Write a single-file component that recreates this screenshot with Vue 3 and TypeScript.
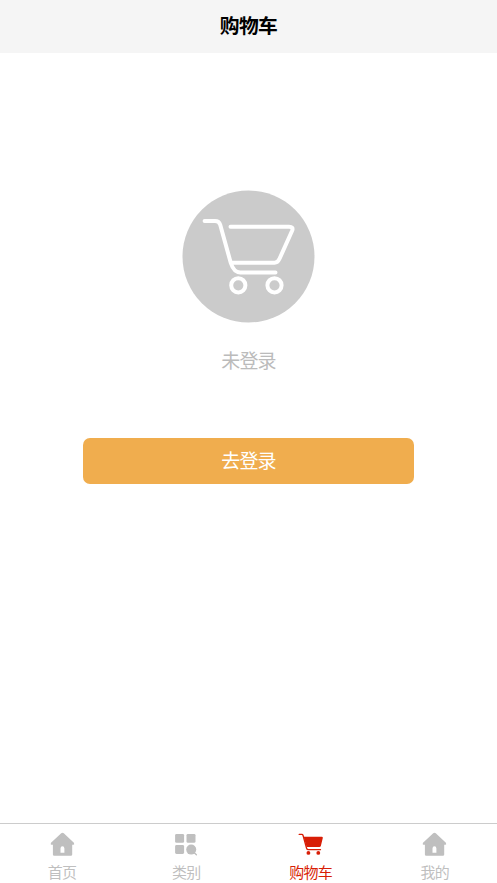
<script setup lang="ts">
import { ref } from 'vue'

interface Tab {
  id: string
  label: string
  icon: 'home' | 'category' | 'cart'
}

const tabs: Tab[] = [
  { id: 'home', label: '首页', icon: 'home' },
  { id: 'category', label: '类别', icon: 'category' },
  { id: 'cart', label: '购物车', icon: 'cart' },
  { id: 'mine', label: '我的', icon: 'home' },
]
const active = ref('cart')
</script>

<template>
  <div class="page">
    <header class="header">购物车</header>
    <main class="content">
      <svg class="empty-cart" viewBox="-0.5 -0.5 133 133">
        <circle cx="66" cy="66" r="66" fill="#cbcbcb" />
        <g fill="none" stroke="#fff" stroke-width="4" stroke-linecap="round" stroke-linejoin="round">
          <path d="M22.1 30.4H32.5Q36.6 30.4 37.7 34.2L48.3 72.5Q51.3 81.9 57.8 81.9H93" />
          <path d="M48 36.2H106.5Q111.3 36.2 109.6 40.3L97 68.3Q95.2 72.3 92 72.3H49.8" />
          <circle cx="55.8" cy="94.8" r="7.1" />
          <circle cx="92" cy="94.8" r="7.1" />
        </g>
      </svg>
      <p class="status">未登录</p>
      <button class="login" type="button">去登录</button>
    </main>
    <nav class="tabbar">
      <a
        v-for="tab in tabs"
        :key="tab.id"
        class="tab"
        :class="{ active: active === tab.id }"
        @click="active = tab.id"
      >
        <svg class="icon" viewBox="0 -0.5 25 25" fill="currentColor">
          <path
            v-if="tab.icon === 'home'"
            fill-rule="evenodd"
            d="M11.2.7Q12.5-.4 13.8.7L23.9 10.2Q24.8 12.2 23.5 12.3H22.2V22Q22.2 23.3 20.9 23.3H4.2Q2.9 23.3 2.9 22V12.3H1.4Q.1 12.2 1 10.2ZM10.5 20.2H14.4V16Q14.4 13.7 12.45 13.7T10.5 16Z"
          />
          <g v-else-if="tab.icon === 'category'">
            <rect x="1.1" y="1.4" width="9" height="8.9" rx="1.4" />
            <rect x="12.5" y="1.4" width="9" height="8.9" rx="1.4" />
            <rect x="1.1" y="12.6" width="9" height="8.9" rx="1.4" />
            <circle cx="17.2" cy="17.1" r="5" />
            <path d="M20 20L22.4 22.3" stroke="currentColor" stroke-width="1.3" stroke-linecap="round" />
          </g>
          <g v-else transform="translate(0.5 0)">
            <path
              d="M.7 1.9H3.4Q4.2 1.9 4.5 2.8L8 15.5Q8.5 17.2 9.8 17.2H22"
              fill="none"
              stroke="currentColor"
              stroke-width="1.3"
              stroke-linecap="round"
            />
            <path d="M5.1 4.3H23.3Q24.5 4.3 24.3 5.5L22.4 13.3Q22.1 14.6 20.8 14.6H8.1Z" />
            <circle cx="9.9" cy="20.4" r="1.9" />
            <circle cx="19.8" cy="20.4" r="1.9" />
          </g>
        </svg>
        <span class="label">{{ tab.label }}</span>
      </a>
    </nav>
  </div>
</template>

<style>
body {
  background: #fff;
}
</style>

<style scoped>
.page {
  display: flex;
  flex-direction: column;
  height: 883px;
  font-family: 'Noto Sans CJK SC', sans-serif;
  overflow: hidden;
}

.header {
  height: 53px;
  background: #f5f5f5;
  color: #000;
  font-size: 19.8px;
  font-weight: 700;
  letter-spacing: -0.6px;
  line-height: 50px;
  text-align: center;
}

.content {
  flex: 1;
  display: flex;
  flex-direction: column;
  align-items: center;
  padding-top: 137px;
}

.empty-cart {
  width: 133px;
  height: 133px;
}

.status {
  margin: 23px 0 0;
  color: #bbb;
  font-size: 19px;
  letter-spacing: -0.9px;
  line-height: 28px;
}

.login {
  width: 331px;
  height: 45.5px;
  margin-top: 64px;
  padding: 0 0 2px;
  border: 0;
  border-radius: 7px;
  background: #f0ad4e;
  color: #fff;
  font-family: inherit;
  font-size: 19px;
  letter-spacing: -0.9px;
}

.tabbar {
  display: flex;
  height: 59px;
  border-top: 1px solid #ccc;
}

.tab {
  flex: 1;
  display: flex;
  flex-direction: column;
  align-items: center;
  padding-top: 8px;
  color: #bfbfbf;
}

.tab.active {
  color: #d81e06;
}

.icon {
  width: 25px;
  height: 25px;
}

.label {
  margin-top: 5px;
  font-size: 15px;
  letter-spacing: -0.7px;
  line-height: 20px;
}
</style>
